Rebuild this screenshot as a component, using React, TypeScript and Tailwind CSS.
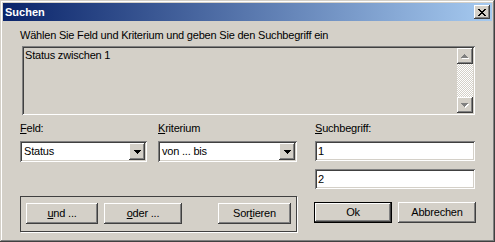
import React from "react";

const raised =
  "shadow-[inset_-1px_-1px_#404040,inset_1px_1px_#ffffff,inset_-2px_-2px_#808080,inset_2px_2px_#d4d0c8]";
const sunken =
  "shadow-[inset_1px_1px_#808080,inset_-1px_-1px_#ffffff,inset_2px_2px_#404040,inset_-2px_-2px_#d4d0c8]";

function ArrowDown({ color = "#000" }: { color?: string }) {
  return (
    <svg width="7" height="4" viewBox="0 0 7 4" shapeRendering="crispEdges">
      <path d="M0 0h7v1H0zM1 1h5v1H1zM2 2h3v1H2zM3 3h1v1H3z" fill={color} />
    </svg>
  );
}

function ArrowUpGray() {
  return (
    <svg width="8" height="5" viewBox="0 0 8 5" shapeRendering="crispEdges">
      <path d="M4 1h1v1H4zM3 2h3v1H3zM2 3h5v1H2zM1 4h7v1H1z" fill="#ffffff" />
      <path d="M3 0h1v1H3zM2 1h3v1H2zM1 2h5v1H1zM0 3h7v1H0z" fill="#808080" />
    </svg>
  );
}

function ArrowDownGray() {
  return (
    <svg width="8" height="5" viewBox="0 0 8 5" shapeRendering="crispEdges">
      <path d="M1 1h7v1H1zM2 2h5v1H2zM3 3h3v1H3zM4 4h1v1H4z" fill="#ffffff" />
      <path d="M0 0h7v1H0zM1 1h5v1H1zM2 2h3v1H2zM3 3h1v1H3z" fill="#808080" />
    </svg>
  );
}

function Combo({ value, width }: { value: string; width: string }) {
  return (
    <div className={`${width} h-[21px] bg-white ${sunken} flex items-stretch p-[2px]`}>
      <div className="flex-1 pl-[2px] leading-[17px]">{value}</div>
      <div className={`w-[16px] bg-[#d4d0c8] ${raised} flex items-center justify-center`}>
        <ArrowDown />
      </div>
    </div>
  );
}

function Edit({ value }: { value: string }) {
  return (
    <div className={`w-[160px] h-[20px] bg-white ${sunken} pl-[3px] leading-[20px]`}>{value}</div>
  );
}

function Button({
  children,
  width,
  def,
}: {
  children: React.ReactNode;
  width: string;
  def?: boolean;
}) {
  if (def) {
    return (
      <div className={`${width} h-[21px] border border-black`}>
        <div className={`w-full h-full ${raised} flex items-center justify-center`}>{children}</div>
      </div>
    );
  }
  return (
    <div className={`${width} h-[21px] ${raised} flex items-center justify-center`}>{children}</div>
  );
}

export default function App() {
  return (
    <div
      className="w-[495px] h-[242px] bg-[#d4d0c8] p-[3px] text-[11px] tracking-[-0.2px] text-black shadow-[inset_-1px_-1px_#404040,inset_1px_1px_#d4d0c8,inset_-2px_-2px_#808080,inset_2px_2px_#ffffff]"
      style={{ fontFamily: '"Liberation Sans", Arial, sans-serif' }}
    >
      {/* Title bar */}
      <div className="h-[18px] bg-[linear-gradient(to_right,#0a246a,#a6caf0)] flex items-center justify-between pl-[2px] pr-[2px]">
        <span className="text-white font-bold leading-[18px] tracking-normal">Suchen</span>
        <div className={`w-[16px] h-[14px] bg-[#d4d0c8] ${raised} flex items-center justify-center`}>
          <svg width="8" height="7" viewBox="0 0 8 7" shapeRendering="crispEdges">
            <path
              d="M0 0h2v1H0zM6 0h2v1H6zM1 1h2v1H1zM5 1h2v1H5zM2 2h4v1H2zM3 3h2v1H3zM2 4h4v1H2zM1 5h2v1H1zM5 5h2v1H5zM0 6h2v1H0zM6 6h2v1H6z"
              fill="#000"
            />
          </svg>
        </div>
      </div>

      {/* Body */}
      <div className="pl-[17px] pt-[8px]">
        <div className="leading-[13px]">Wählen Sie Feld und Kriterium und geben Sie den Suchbegriff ein</div>

        {/* Memo */}
        <div className={`ml-[2px] mt-[4px] w-[453px] h-[69px] bg-[#d4d0c8] ${sunken} p-[2px] flex`}>
          <div className="flex-1 pl-[1px] pt-[1px] leading-[13px]">Status zwischen 1</div>
          <div className="w-[16px] flex flex-col">
            <div className={`h-[16px] bg-[#d4d0c8] ${raised} flex items-center justify-center`}>
              <ArrowUpGray />
            </div>
            <div className="flex-1 bg-[repeating-conic-gradient(#ffffff_0_25%,#d4d0c8_0_50%)] bg-[length:2px_2px]" />
            <div className={`h-[16px] bg-[#d4d0c8] ${raised} flex items-center justify-center`}>
              <ArrowDownGray />
            </div>
          </div>
        </div>

        {/* Fields row */}
        <div className="flex mt-[7px]">
          <div className="w-[138px] flex flex-col">
            <div className="leading-[13px]">
              <span className="underline">F</span>eld:
            </div>
            <div className="mt-[6px]">
              <Combo value="Status" width="w-[127px]" />
            </div>
          </div>
          <div className="w-[157px] flex flex-col">
            <div className="leading-[13px]">
              <span className="underline">K</span>riterium
            </div>
            <div className="mt-[6px]">
              <Combo value="von ... bis" width="w-[139px]" />
            </div>
          </div>
          <div className="flex flex-col">
            <div className="leading-[13px]">
              <span className="underline">S</span>uchbegriff:
            </div>
            <div className="mt-[6px]">
              <Edit value="1" />
            </div>
            <div className="mt-[8px]">
              <Edit value="2" />
            </div>
          </div>
        </div>

        {/* Bottom row */}
        <div className="flex mt-[7px] items-start">
          <div className="w-[277px] h-[36px] border border-[#404040] shadow-[1px_1px_#ffffff] px-[5px] pt-[6px] flex">
            <Button width="w-[72px]">
              <span>
                <span className="underline">u</span>nd ...
              </span>
            </Button>
            <div className="ml-[6px]">
              <Button width="w-[78px]">
                <span>
                  <span className="underline">o</span>der ...
                </span>
              </Button>
            </div>
            <div className="ml-auto">
              <Button width="w-[73px]">
                <span>
                  Sor<span className="underline">t</span>ieren
                </span>
              </Button>
            </div>
          </div>
          <div className="ml-[17px] mt-[6px] flex gap-[6px]">
            <Button width="w-[78px]" def>
              Ok
            </Button>
            <Button width="w-[78px]">Abbrechen</Button>
          </div>
        </div>
      </div>
    </div>
  );
}
